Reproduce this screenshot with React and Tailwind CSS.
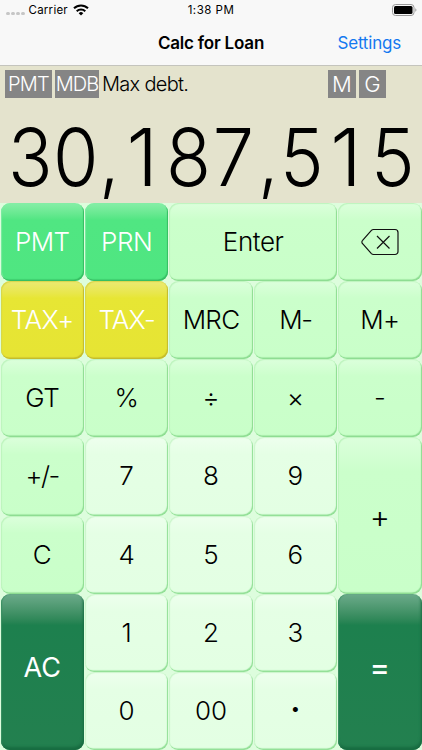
import React from 'react';

const tones = {
    green: 'text-white bg-linear-to-b from-[#86eea7] via-[#50e682] via-22% to-[#4fe681] shadow-[inset_-1px_-1.5px_1px_#35bd62,inset_1px_0_1px_#7deca1]',
    yellow: 'text-white bg-linear-to-b from-[#ece972] via-[#e7e634] via-22% to-[#e6e434] shadow-[inset_-1px_-1.5px_1px_#c3ba2c,inset_1px_1px_1px_#d8d64b]',
    mint: 'text-black bg-linear-to-b from-[#dcffdc] via-[#cbffcb] via-22% to-[#c9ffc9] shadow-[inset_-1px_-1.5px_1px_#8cdc90,inset_1px_1px_1px_#bdf4bd]',
    pale: 'text-black bg-linear-to-b from-[#eeffee] via-[#e5ffe5] via-22% to-[#e3ffe3] shadow-[inset_-1px_-1.5px_1px_#90df94,inset_1px_1px_1px_#caf6ca]',
    dark: 'text-white bg-linear-to-b from-[#6cab8b] via-[#1d804e] via-20% to-[#23804f] shadow-[inset_-1px_-3px_3px_#176b40,inset_1px_0_1px_#43966b]',
};

const keys = [
    { label: 'PMT', tone: 'green', text: 'tracking-[-0.7px]' },
    { label: 'PRN', tone: 'green', text: 'tracking-[-0.5px]' },
    { label: 'Enter', tone: 'mint', span: 'col-span-2', text: 'tracking-[-0.4px]' },
    { label: 'delete', tone: 'mint' },
    { label: 'TAX+', tone: 'yellow', text: 'tracking-[-0.5px]' },
    { label: 'TAX-', tone: 'yellow', text: 'tracking-[-0.9px]' },
    { label: 'MRC', tone: 'mint', text: 'tracking-[-0.7px]' },
    { label: 'M-', tone: 'mint', text: 'tracking-[-1.5px]' },
    { label: 'M+', tone: 'mint', text: 'tracking-[-0.6px]' },
    { label: 'GT', tone: 'mint', text: 'tracking-[-0.5px]' },
    { label: '%', tone: 'mint' },
    { label: '÷', tone: 'mint' },
    { label: '×', tone: 'mint' },
    { label: '-', tone: 'mint' },
    { label: '+/-', tone: 'mint', text: 'tracking-[-1.5px]' },
    { label: '7', tone: 'pale' },
    { label: '8', tone: 'pale' },
    { label: '9', tone: 'pale' },
    { label: '+', tone: 'mint', span: 'row-span-2', text: 'pt-[2px]', size: 'text-[31px]' },
    { label: 'C', tone: 'mint' },
    { label: '4', tone: 'pale' },
    { label: '5', tone: 'pale' },
    { label: '6', tone: 'pale' },
    { label: 'AC', tone: 'dark', span: 'row-span-2', text: 'pb-2', size: 'text-[27px]', weight: 'font-normal' },
    { label: '1', tone: 'pale' },
    { label: '2', tone: 'pale' },
    { label: '3', tone: 'pale' },
    { label: '=', tone: 'dark', span: 'row-span-2', text: 'pb-[9px]', size: 'text-[30px]', weight: 'font-medium' },
    { label: '0', tone: 'pale' },
    { label: '00', tone: 'pale' },
    { label: '·', tone: 'pale', text: 'pb-[2px]', size: 'text-[32px]', weight: 'font-semibold' },
];

const DeleteIcon = () => (
    <svg className="ml-[1px]" width="38" height="28" viewBox="0 0 38 28" fill="none" stroke="#111" strokeWidth="1.2">
        <path d="M12.500 1.500H34a3 3 0 0 1 3 3v19a3 3 0 0 1-3 3H12.500a3 3 0 0 1-2.100-.9L1.600 15.700a2.400 2.400 0 0 1 0-3.400l8.800-9.900a3 3 0 0 1 2.100-.9Z" />
        <path d="m16 8 12.500 12.500M28.500 8 16 20.500" />
    </svg>
);

const StatusBar = () => (
    <div className="grid h-5 grid-cols-3 items-center text-[11.500px] leading-5 text-black">
        <div className="flex items-center pl-[6px]">
            <div className="mt-[7px] mr-[4px] flex gap-[1.500px]">
                {[0, 1, 2, 3].map(dot => (
                    <span key={dot} className="size-[3.500px] rounded-full bg-[#c6c6c6]"></span>
                ))}
            </div>
            <span className="tracking-[0.25px]">Carrier</span>
            <svg className="ml-[5px]" width="16" height="12" viewBox="0 0 16 12" fill="none" stroke="#000" strokeWidth="2">
                <path d="M1 4.300a10 10 0 0 1 14 0" />
                <path d="M3.700 7.200a6.200 6.200 0 0 1 8.600 0" />
                <path d="M8 11.500 5.700 9.200a3.300 3.300 0 0 1 4.600 0Z" fill="#000" stroke="none" />
            </svg>
        </div>
        <span className="text-center tracking-[0.5px]">1:38 PM</span>
        <div className="flex justify-end pr-[5px]">
            <svg width="25" height="12" viewBox="0 0 25 12">
                <rect x="0.500" y="0.500" width="21.500" height="11" rx="3" fill="none" stroke="#999" />
                <rect x="2" y="2" width="18.500" height="8" rx="1.500" fill="#000" />
                <path d="M23.300 4.200c1.500.6 1.500 3 0 3.600Z" fill="#999" />
            </svg>
        </div>
    </div>
);

// Every digit takes a full cell, a comma takes half of one
const Readout = ({ value }) => (
    <div className="mt-[15px] flex justify-end pr-[7px] text-[80px] leading-[88px] font-light">
        {value.split('').map((char, i) => (
            <span key={i} className={`flex justify-center ${char === ',' ? 'w-[22.6px]' : 'w-[45.3px]'}`}>
                <span className={char === '1' ? 'mr-[2px]' : 'scale-x-[0.92]'}>{char}</span>
            </span>
        ))}
    </div>
);

const Key = ({ label, tone, span, text, size, weight }) => (
    <div className={`flex ${span || ''}`}>
        <button
            className={`mx-[0.5px] flex flex-1 items-center justify-center rounded-[9px] leading-none ${size || 'text-[26px]'} ${weight || 'font-light'} ${tones[tone]} ${text || ''}`}
        >
            {label === 'delete' ? <DeleteIcon /> : label}
        </button>
    </div>
);

const App = () => {
    return (
        <div className="flex h-[750px] w-[422px] flex-col overflow-hidden bg-[#e4e3cd] font-['Inter','Liberation_Sans',sans-serif]">
            <header className="h-[66px] shrink-0 border-b border-[#c4c4bd] bg-[#f8f8f8]">
                <StatusBar />
                <div className="grid h-[46px] grid-cols-[1fr_auto_1fr] items-center pt-[2px] text-[17px]">
                    <span></span>
                    <h1 className="font-semibold tracking-[-0.2px]">Calc for Loan</h1>
                    <span className="pr-[21px] text-right tracking-[-0.2px] text-[#1478f0]">Settings</span>
                </div>
            </header>

            <section className="flex h-[137px] shrink-0 flex-col">
                <div className="mt-[4px] flex h-[28px] items-center pl-[5px] text-[20px] leading-7 font-light">
                    <span className="w-[47px] bg-[#858585] text-center tracking-[-0.7px] text-white">PMT</span>
                    <span className="ml-[3px] w-[44px] bg-[#858585] text-center tracking-[-1px] text-white">MDB</span>
                    <span className="ml-[3px] tracking-[-0.7px]">Max debt.</span>
                    <span className="mr-[3px] ml-auto w-[28px] bg-[#858585] text-center text-[22px] text-white">M</span>
                    <span className="mr-[36px] w-[27px] bg-[#858585] text-center text-[22px] text-white">G</span>
                </div>
                <Readout value="30,187,515" />
            </section>

            <main className="grid min-h-0 flex-1 grid-cols-5 grid-rows-7 bg-[#ddfddd]">
                {keys.map(key => (
                    <Key key={key.label} {...key} />
                ))}
            </main>
        </div>
    );
};

export default App;
